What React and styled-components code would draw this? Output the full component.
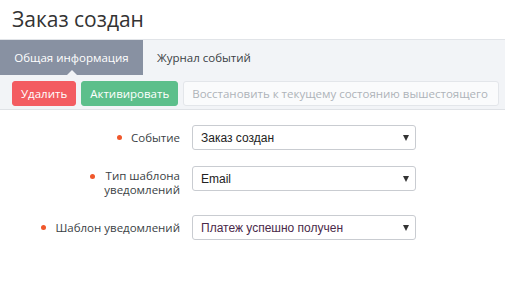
import React from 'react'
import styled, {createGlobalStyle} from 'styled-components'

const Global = createGlobalStyle`
  body {
    margin: 0;
    background: #fff;
    font-family: "Open Sans", "Liberation Sans", sans-serif;
    color: #333;
  }
`

const Page = styled.div`
  width: 505px;
`

const Title = styled.h1`
  margin: 0;
  height: 39px;
  padding: 4px 12px 0;
  box-sizing: border-box;
  font-size: 21px;
  font-weight: 400;
  line-height: 30px;
  color: #333;
`

const Tabs = styled.div`
  display: flex;
  height: 36px;
  box-sizing: border-box;
  background: #f2f4f7;
  border-top: 1px solid #e1e4e8;
`

const Tab = styled.div`
  position: relative;
  display: flex;
  align-items: center;
  width: ${p => (p.$active ? '143px' : 'auto')};
  justify-content: center;
  padding: 0 ${p => (p.$active ? '0' : '14px')};
  font-size: 11.5px;
  color: ${p => (p.$active ? '#fff' : '#3a3f45')};
  background: ${p => (p.$active ? '#8891a2' : 'transparent')};

  ${p => p.$active && `
    &::after {
      content: '';
      position: absolute;
      left: 50%;
      bottom: 0;
      margin-left: -5px;
      border: 5px solid transparent;
      border-bottom-color: #f2f4f7;
      border-top: 0;
    }
  `}
`

const Toolbar = styled.div`
  display: flex;
  gap: 5px;
  padding: 6px 6px 3px 12px;
  height: 35px;
  box-sizing: border-box;
  background: #f2f4f7;
  border-bottom: 1px solid #dfe2e6;
`

const Button = styled.div`
  display: flex;
  align-items: center;
  height: 25px;
  padding: 0 8px;
  box-sizing: border-box;
  border-radius: 3px;
  font-size: 11.5px;
  white-space: nowrap;
  overflow: hidden;
  color: ${p => (p.$disabled ? '#aeb3b9' : '#fff')};
  background: ${p => p.$bg};
  border: 1px solid ${p => (p.$disabled ? '#e3e6ea' : p.$bg)};
  ${p => p.$grow && 'flex: 1;'}
`

const Form = styled.div`
  display: grid;
  grid-template-columns: 180px 224px;
  column-gap: 12px;
  padding-top: 15px;
`

const Label = styled.div`
  display: flex;
  justify-content: flex-end;
  align-items: ${p => (p.$top ? 'flex-start' : 'center')};
  gap: 9px;
  height: ${p => p.$h}px;
  margin-bottom: ${p => p.$mb}px;
  padding-top: ${p => (p.$top ? 3 : 0)}px;
  box-sizing: border-box;
  font-size: 11.5px;
  line-height: 14px;
  color: #3a3f45;
  text-align: right;
`

const Dot = styled.span`
  flex: none;
  width: 5px;
  height: 5px;
  border-radius: 50%;
  background: #f0572b;
  margin-top: ${p => (p.$top ? 5 : 0)}px;
`

const Select = styled.div`
  display: flex;
  align-items: center;
  justify-content: space-between;
  height: 25px;
  padding: 0 6px 0 8px;
  box-sizing: border-box;
  border: 1px solid #c9ccd1;
  border-radius: 3px;
  background: #fff;
  font-family: "Liberation Sans", Arial, sans-serif;
  font-size: 12px;
  color: ${p => p.$color || '#222'};
`

const Caret = styled.span`
  width: 0;
  height: 0;
  border-left: 3.5px solid transparent;
  border-right: 3.5px solid transparent;
  border-top: 6px solid #333;
`

const Row = ({label, value, h, mb, top, color}) => (
  <>
    <Label $h={h} $mb={mb} $top={top}>
      <Dot $top={top} />
      <span>{label}</span>
    </Label>
    <Select $color={color}>
      {value}
      <Caret />
    </Select>
  </>
)

export default function App() {
  return (
    <Page>
      <Global />
      <Title>Заказ создан</Title>
      <Tabs>
        <Tab $active>Общая информация</Tab>
        <Tab>Журнал событий</Tab>
      </Tabs>
      <Toolbar>
        <Button $bg="#f35c61">Удалить</Button>
        <Button $bg="#5cbf8b">Активировать</Button>
        <Button $bg="#fafbfc" $disabled $grow>
          Восстановить к текущему состоянию вышестоящего
        </Button>
      </Toolbar>
      <Form>
        <Row label="Событие" value="Заказ создан" h={25} mb={16} />
        <Row
          label={<>Тип шаблона<br />уведомлений</>}
          value="Email"
          h={34}
          mb={15}
          top
        />
        <Row label="Шаблон уведомлений" value="Платеж успешно получен" h={25} mb={0} color="#4a2a4a" />
      </Form>
    </Page>
  )
}
